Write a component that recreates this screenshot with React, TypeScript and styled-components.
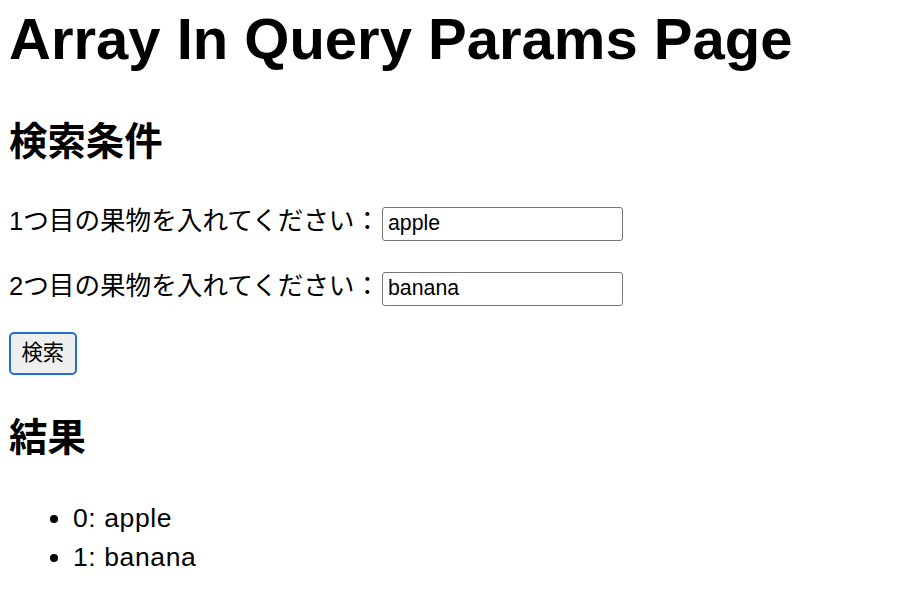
import React from "react";
import styled, { createGlobalStyle } from "styled-components";

const GlobalStyle = createGlobalStyle`
  html, body {
    margin: 0;
    padding: 0;
    background: #ffffff;
  }
  body {
    font-family: "Liberation Sans", "Noto Sans CJK JP", sans-serif;
    color: #000000;
  }
`;

const Page = styled.main`
  padding: 0 9px;
  display: flex;
  flex-direction: column;
`;

const Title = styled.h1`
  margin: 6px 0 0;
  font-family: "Liberation Sans", "Noto Sans CJK JP", sans-serif;
  font-size: 58px;
  font-weight: 700;
  line-height: 66px;
`;

const SectionTitle = styled.h2<{ $top: number }>`
  margin: ${(p) => p.$top}px 0 0;
  font-size: 38.4px;
  font-weight: 700;
  line-height: 46px;
`;

const Form = styled.form`
  display: flex;
  flex-direction: column;
  align-items: flex-start;
  gap: 26.6px;
  margin-top: 37px;
`;

const Row = styled.div`
  display: flex;
  align-items: baseline;
`;

const Label = styled.label`
  font-size: 25.6px;
  line-height: 38px;
`;

const Input = styled.input`
  box-sizing: border-box;
  width: 241px;
  height: 34px;
  margin: 0 0 0 2px;
  padding: 0 5px;
  border: 1px solid #767676;
  border-radius: 3px;
  background: #ffffff;
  font-family: "Liberation Sans", sans-serif;
  font-size: 21.3px;
  color: #000000;
  outline: none;
`;

const Button = styled.button`
  box-sizing: border-box;
  height: 43px;
  margin: 0;
  padding: 0 10.5px;
  border: 2px solid #1f6fd5;
  border-radius: 5px;
  background: #efefef;
  font-family: "Liberation Sans", "Noto Sans CJK JP", sans-serif;
  font-size: 21.3px;
  color: #000000;
  line-height: 1;
`;

const ResultList = styled.ul`
  margin: 38px 0 0;
  padding: 0 0 0 64px;
  list-style: disc;
`;

const ResultItem = styled.li`
  font-size: 26.5px;
  letter-spacing: 0.6px;
  line-height: 38.4px;
`;

const fruits = ["apple", "banana"];

export default function App() {
  return (
    <>
      <GlobalStyle />
      <Page>
        <Title>Array In Query Params Page</Title>
        <SectionTitle $top={47}>検索条件</SectionTitle>
        <Form onSubmit={(e) => e.preventDefault()}>
          <Row>
            <Label htmlFor="fruit1">1つ目の果物を入れてください：</Label>
            <Input id="fruit1" defaultValue="apple" />
          </Row>
          <Row>
            <Label htmlFor="fruit2">2つ目の果物を入れてください：</Label>
            <Input id="fruit2" defaultValue="banana" />
          </Row>
          <Button type="submit">検索</Button>
        </Form>
        <SectionTitle $top={40}>結果</SectionTitle>
        <ResultList>
          {fruits.map((f, i) => (
            <ResultItem key={f}>
              {i}: {f}
            </ResultItem>
          ))}
        </ResultList>
      </Page>
    </>
  );
}
